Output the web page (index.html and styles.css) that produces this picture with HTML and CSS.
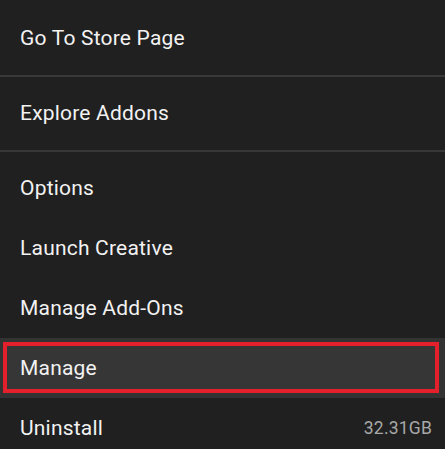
FILE: index.html
```html
<!DOCTYPE html>
<html>
<head>
  <title>Game Menu</title>
  <link rel="stylesheet" href="styles.css">
</head>
<body>
  <div class="menu">
    <div class="group">
      <div class="item">Go To Store Page</div>
    </div>
    <div class="group">
      <div class="item">Explore Addons</div>
    </div>
    <div class="group">
      <div class="item">Options</div>
      <div class="item">Launch Creative</div>
      <div class="item">Manage Add-Ons</div>
      <div class="item active"><div class="marked">Manage</div></div>
      <div class="item">Uninstall <span class="size">32.31GB</span></div>
    </div>
  </div>
</body>
</html>
```
FILE: styles.css
```css
body {
  margin: 0;
  background-color: #202020;
  font-family: Roboto, "Liberation Sans", sans-serif;
  color: #f2f2f2;
  overflow: hidden;
}
.menu {
  width: 445px;
}
.group {
  padding: 6px 0 7px;
  border-bottom: 2px solid #383838;
}
.group:first-child {
  padding-top: 8px;
}
.group:last-child {
  border-bottom: none;
  padding-bottom: 0;
}
.item {
  height: 60px;
  display: flex;
  align-items: center;
  justify-content: space-between;
  padding: 0 13px 0 20px;
  font-size: 21px;
  letter-spacing: 0.2px;
}
.item.active {
  background-color: #333333;
  padding: 4px 6px 5px 3px;
  box-sizing: border-box;
}
.marked {
  flex: 1;
  height: 100%;
  box-sizing: border-box;
  border: 4px solid #e3202b;
  display: flex;
  align-items: center;
  padding-left: 13px;
  background-color: #363636;
}
.size {
  font-size: 17.5px;
  color: #a8a8a8;
}
```
